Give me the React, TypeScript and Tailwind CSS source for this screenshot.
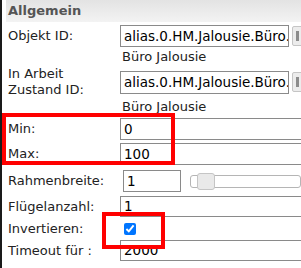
// Einstellungs-Panel "Allgemein" mit markierten Feldern (rote Rahmen)
const font = "font-['DejaVu_Sans',Verdana,sans-serif]";

function Field({ value, w = "w-[200px]" }: { value: string; w?: string }) {
  return (
    <div className={`h-full ${w} shrink-0 border border-[#8a8a8a] bg-white px-[3px] flex items-center text-[13.5px] text-black whitespace-nowrap overflow-hidden`}>
      {value}
    </div>
  );
}

function IdButton() {
  return (
    <div className="ml-[3px] h-[20px] w-[14px] shrink-0 rounded-[2px] border border-[#c5c5c5] bg-[#ececec] flex items-center pl-[3px]">
      <div className="h-[10px] w-[3px] bg-[#8c8c8c]" />
    </div>
  );
}

function Row({ label, h, mt, children }: { label: React.ReactNode; h: string; mt: string; children: React.ReactNode }) {
  return (
    <div className={`flex items-center ${h} ${mt}`}>
      <div className="w-[112px] shrink-0 leading-[16px]">{label}</div>
      <div className="flex h-full min-w-0 items-center">{children}</div>
    </div>
  );
}

export default function App() {
  return (
    <div className={`relative h-[268px] w-[301px] overflow-hidden border-l-2 border-[#1a1a1a] bg-white ${font} text-[13px] text-[#222]`}>
      <div className="ml-[4px]">
        <div className="h-[22px] bg-gradient-to-b from-[#e3e3e3] to-[#f3f3f3] pl-[2px] flex items-center font-bold text-[#555]">
          Allgemein
        </div>
        <div className="pl-[2px]">
          <Row label="Objekt ID:" h="h-[22px]" mt="mt-[3px]">
            <Field value="alias.0.HM.Jalousie.Büro." w="w-[169px]" />
            <IdButton />
          </Row>
          <div className="h-[17px] pl-[114px] leading-[17px] mt-[1px]">Büro Jalousie</div>
          <Row label={<>In Arbeit<br />Zustand ID:</>} h="h-[32px]" mt="mt-[1px]">
            <div className="flex h-[23px] items-center">
              <Field value="alias.0.HM.Jalousie.Büro." w="w-[169px]" />
              <IdButton />
            </div>
          </Row>
          <div className="h-[17px] pl-[114px] leading-[17px]">Büro Jalousie</div>
          <Row label="Min:" h="h-[22px]" mt="mt-[3px]">
            <Field value="0" />
          </Row>
          <Row label="Max:" h="h-[22px]" mt="mt-[3px]">
            <Field value="100" />
          </Row>
          <Row label="Rahmenbreite:" h="h-[22px]" mt="mt-[5px]">
            <div className="ml-[3px] h-full">
              <Field value="1" w="w-[58px]" />
            </div>
            <div className="relative ml-[9px] h-[13px] w-[130px] rounded-[3px] border border-[#b5b5b5] bg-white">
              <div className="absolute left-[6px] top-[-3px] h-[17px] w-[18px] rounded-[3px] border border-[#c5c5c5] bg-[#e9e9e9]" />
            </div>
          </Row>
          <Row label="Flügelanzahl:" h="h-[21px]" mt="mt-[4px]">
            <Field value="1" />
          </Row>
          <Row label="Invertieren:" h="h-[22px]" mt="mt-[1px]">
            <input type="checkbox" checked readOnly className="ml-[4px] h-[12px] w-[12px] accent-[#0075ff]" />
          </Row>
          <Row label="Timeout für :" h="h-[21px]" mt="mt-[0px]">
            <Field value="2000" />
          </Row>
          <div className="mt-[6px] h-[14px] leading-[14px]">Ausfahrzeit:</div>
        </div>
      </div>
      {/* Markierungen */}
      <div className="pointer-events-none absolute left-0 top-[113px] h-[52px] w-[173px] border-[4px] border-[#ff0000]" />
      <div className="pointer-events-none absolute left-[100px] top-[212px] h-[37px] w-[63px] border-[4px] border-[#ff0000]" />
    </div>
  );
}
